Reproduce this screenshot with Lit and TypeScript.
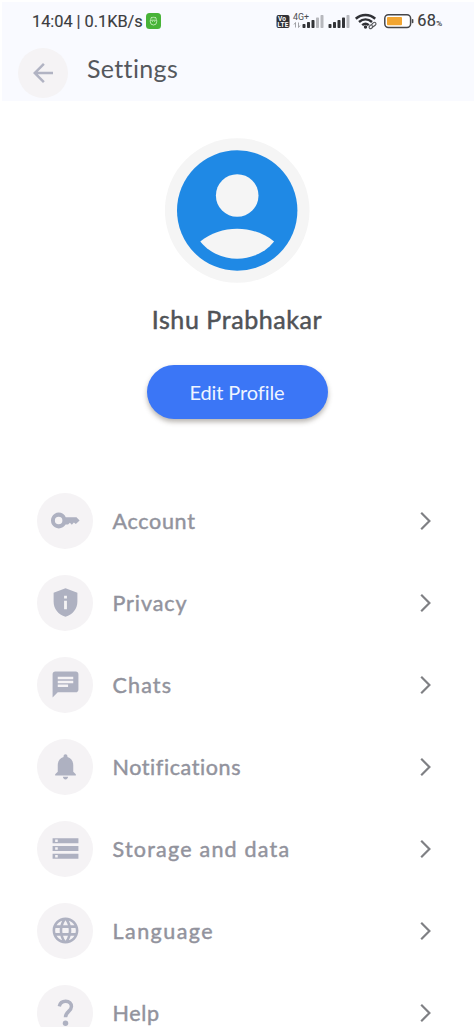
import { LitElement, html, css, svg } from "lit";
import { customElement } from "lit/decorators.js";

const keyIcon = svg`<path fill-rule="evenodd" d="M6.700 5.900c2.500 0 4.600 1.500 5.500 3.600h8.300L22.900 12l-2.900 2.700-1.500-1.200-1.600 1.700-1.500-1.400-1.400 1.300h-1.900A6.100 6.100 0 1 1 6.700 5.900zm0 3.200a2.900 2.900 0 1 0 0 5.800 2.900 2.900 0 0 0 0-5.800z"/>`;
const shieldIcon = svg`<path fill-rule="evenodd" d="M12 1L2.800 4.500v6.700c0 5.600 3.600 10.300 9.200 11.800 5.600-1.500 9.200-6.200 9.200-11.800V4.500zM10.900 6.700h2.200v2.200h-2.200zm0 3.900h2.200v6.700h-2.200z"/>`;
const chatIcon = svg`<path d="M20 2H4c-1.100 0-1.990.9-1.990 2L2 22l4-4h14c1.100 0 2-.9 2-2V4c0-1.100-.9-2-2-2zM6 6h12v2H6V6zm8 8H6v-2h8v2zm4-3H6V9h12v2z"/>`;
const bellIcon = svg`<path d="M12 22c1.100 0 2-.9 2-2h-4c0 1.100.89 2 2 2zm6-6v-5c0-3.070-1.640-5.640-4.500-6.320V4c0-.83-.67-1.500-1.500-1.500s-1.500.67-1.500 1.500v.68C7.630 5.360 6 7.920 6 11v5l-2 2v1h16v-1l-2-2z"/>`;
const storageIcon = svg`<path d="M2 20h20v-4H2v4zm2-3h2v2H4v-2zM2 4v4h20V4H2zm4 3H4V5h2v2zm-4 7h20v-4H2v4zm2-3h2v2H4v-2z"/>`;
const globeIcon = svg`<path d="M11.990 2C6.470 2 2 6.480 2 12s4.470 10 9.990 10C17.520 22 22 17.520 22 12S17.520 2 11.990 2zm6.930 6h-2.950c-.32-1.250-.78-2.450-1.380-3.560 1.840.63 3.370 1.910 4.330 3.560zM12 4.040c.83 1.200 1.480 2.530 1.910 3.960h-3.820c.43-1.430 1.080-2.760 1.910-3.960zM4.260 14C4.100 13.360 4 12.690 4 12s.1-1.360.26-2h3.380c-.08.66-.14 1.320-.14 2 0 .68.06 1.340.14 2H4.260zm.82 2h2.950c.32 1.250.78 2.450 1.380 3.560-1.840-.63-3.370-1.900-4.330-3.560zm2.950-8H5.080c.96-1.660 2.490-2.930 4.330-3.560C8.810 5.550 8.350 6.750 8.030 8zM12 19.960c-.83-1.200-1.480-2.530-1.910-3.960h3.820c-.43 1.430-1.080 2.760-1.910 3.960zM14.340 14H9.660c-.09-.66-.16-1.320-.16-2 0-.68.07-1.350.16-2h4.680c.09.65.16 1.320.16 2 0 .68-.07 1.340-.16 2zm.25 5.560c.6-1.110 1.060-2.310 1.380-3.560h2.950c-.96 1.650-2.490 2.930-4.330 3.560zM16.360 14c.08-.66.14-1.320.14-2 0-.68-.06-1.340-.14-2h3.380c.16.64.26 1.310.26 2s-.1 1.360-.26 2h-3.380z"/>`;
const helpIcon = svg`<path d="M7.200 7.200C7.800 4.500 9.500 3.300 12.100 3.300c2.900 0 4.500 1.700 4.500 4.100 0 3.600-4.600 4-4.600 8.300" fill="none" stroke="currentColor" stroke-width="2.700"/><circle cx="12" cy="20.300" r="2.100"/>`;

const items = [
  { label: "Account", icon: keyIcon, spacing: 0.7 },
  { label: "Privacy", icon: shieldIcon, spacing: 0.9 },
  { label: "Chats", icon: chatIcon, spacing: 1.15 },
  { label: "Notifications", icon: bellIcon, spacing: 0.6 },
  { label: "Storage and data", icon: storageIcon, spacing: 1.22 },
  { label: "Language", icon: globeIcon, spacing: 1.45 },
  { label: "Help", icon: helpIcon, spacing: 0.7 },
];

@customElement("status-bar")
class StatusBar extends LitElement {
  static styles = css`
    :host { display: flex; align-items: center; height: 38px; padding: 0 32px 0 32px; font: 400 16.4px Roboto, sans-serif; color: #3b3c40; -webkit-text-stroke: 0.15px currentColor; white-space: nowrap; box-sizing: border-box; }
    .time { letter-spacing: -0.05px; width: 114px; line-height: 20px; padding-top: 2px; }
    .app { display: block; width: 15px; height: 16px; margin-top: 0; }
    .signals { display: block; margin: 1px 3px 0 auto; }
    .signals text { -webkit-text-stroke: 0; }
    .level { letter-spacing: 0.2px; line-height: 20px; padding-top: 3px; }
    .percent { font-size: 8px; letter-spacing: 0; }
  `;
  render() {
    const bars = (x: number, lit: number) => [0, 1, 2, 3, 4].map((i) => {
      const h = [4, 6, 8, 10.5, 13][i];
      return svg`<rect x=${x + i * 4.5} y=${16 - h} width="3" height=${h} rx=".7" fill=${i < lit ? "#333438" : "#b7b8bd"}/>`;
    });
    return html`
      <span class="time">14:04 | 0.1KB/s</span>
      <svg class="app" viewBox="0 0 15 16"><rect width="15" height="16" rx="3.500" fill="#48b338"/><path d="M4.300 7.200h6.400v1.600a3.200 3.200 0 0 1-6.400 0zM4.500 6.500c.3-1.500 1.500-2.200 3-2.200s2.700.7 3 2.200M5 4l1 1.200M10 4 9 5.200M6 8.500h.8M8.300 8.500h.8" fill="none" stroke="#d5f4cd" stroke-width=".8"/></svg>
      <svg class="signals" width="138" height="18" viewBox="0 0 138 18">
        <rect x=".5" y="2" width="13" height="13" rx="2" fill="#303136"/>
        <text x="2" y="7.800" font-size="6.500" font-weight="700" fill="#fff" textLength="8">Vo</text>
        <text x="1.500" y="14" font-size="6.500" font-weight="700" fill="#fff" textLength="11">LTE</text>
        <text x="17" y="7.300" font-size="8.500" font-weight="400" fill="#4b4c51" textLength="16" lengthAdjust="spacingAndGlyphs">4G+</text>
        <path d="M19.500 14.500v-5l-1.500 2M22.500 9.500v5l1.500-2" fill="none" stroke="#97989d" stroke-width=".9"/>
        <g transform="translate(0 -1)">
        ${bars(26.5, 3)} ${bars(52.5, 4)}
        <g fill="none" stroke="#303136" stroke-width="2.500">
          <path d="M79.800 6.700c5.700-5 13.700-5 19.400 0M83 10c3.900-3.300 9.100-3.300 13 0M86.200 13.100c2-1.700 4.600-1.700 6.600 0"/>
        </g>
        <circle cx="89.500" cy="15" r="1.700" fill="#303136"/>
        <g fill="none" stroke="#55565a" stroke-width="1.100" transform="rotate(-40 96.500 13.500)"><rect x="92.500" y="12" width="4.600" height="3" rx="1.500" fill="#f9faff"/><rect x="96" y="12" width="4.600" height="3" rx="1.500" fill="#f9faff"/></g>
        <rect x="108.800" y="2.800" width="25.800" height="12.600" rx="3.600" fill="#fff" stroke="#45464a" stroke-width="1.500"/>
        <rect x="111" y="5" width="15" height="8.300" rx="1" fill="#f2a531"/>
        <rect x="135.800" y="7" width="1.600" height="4.200" rx=".8" fill="#45464a"/>
        </g>
      </svg>
      <span class="level">68<span class="percent">%</span></span>
    `;
  }
}

@customElement("setting-row")
class SettingRow extends LitElement {
  static properties = { item: { attribute: false } };
  declare item: (typeof items)[number];
  static styles = css`
    :host { display: flex; align-items: center; height: 82px; padding: 0 42px 0 37px; }
    .disc { width: 56px; height: 56px; border-radius: 50%; background: #f5f3f5; display: grid; place-items: center; color: #aeb1c1; flex: none; }
    .glyph { display: block; width: 31px; height: 31px; fill: currentColor; }
    .label { flex: 1; padding: 1px 0 0 19.500px; font: 400 21.500px Lato, sans-serif; line-height: 30px; color: #92939d; -webkit-text-stroke: 0.45px currentColor; white-space: nowrap; }
    .chevron { display: block; width: 13px; height: 20px; fill: none; stroke: #7f8084; stroke-width: 2.200; }
  `;
  render() {
    return html`
      <div class="disc"><svg class="glyph" viewBox="0 0 24 24">${this.item.icon}</svg></div>
      <span class="label" style="letter-spacing:${this.item.spacing}px">${this.item.label}</span>
      <svg class="chevron" viewBox="0 0 13 20"><path d="M2.200 1.800 10.400 10 2.200 18.200"/></svg>
    `;
  }
}

@customElement("app-root")
class AppRoot extends LitElement {
  static styles = css`
    :host { display: block; width: 474px; height: 1027px; overflow: hidden; background: #fff; font-family: Lato, sans-serif; box-sizing: border-box; }
    .header { height: 99px; margin: 0 0 0 2px; border-top: 2px solid #fff; background: #f9faff; }
    .bar { margin-left: -2px; }
    .title-row { display: flex; padding: 7.500px 0 0 16px; height: 50px; }
    .back { width: 50px; height: 50px; border-radius: 50%; background: #f5f3f5; display: grid; place-items: center; }
    .arrow { display: block; width: 30px; height: 30px; fill: #b1b3c3; }
    .title { margin: 2px 0 0 19px; font-size: 25px; line-height: 36px; font-weight: 400; color: #55585d; letter-spacing: 0.35px; }
    .profile { display: flex; flex-direction: column; align-items: center; padding-top: 37px; }
    .avatar { display: block; width: 145px; height: 145px; }
    .avatar circle, .avatar path { transform: translateX(-0.3px); }
    .name { margin: 18px 0 0; font-size: 25px; line-height: 36px; font-weight: 400; -webkit-text-stroke: 0.5px currentColor; color: #505357; letter-spacing: 0.57px; }
    .edit { margin: 28px 0 0; width: 181px; height: 54px; border: 0; border-radius: 27px; background: #3b76f6; color: #eef4ff; font: 400 20px Lato, sans-serif; letter-spacing: -0.1px; box-shadow: 0 3px 5px rgba(70, 60, 50, 0.38); }
    .list { padding-top: 60.500px; }
  `;
  render() {
    return html`
      <header class="header">
        <status-bar class="bar"></status-bar>
        <div class="title-row">
          <div class="back"><svg class="arrow" viewBox="0 0 24 24"><path d="M20 11H7.830l5.590-5.590L12 4l-8 8 8 8 1.410-1.410L7.830 13H20v-2z"/></svg></div>
          <h1 class="title">Settings</h1>
        </div>
      </header>
      <section class="profile">
        <svg class="avatar" viewBox="0 0 145 145">
          <circle cx="72.500" cy="72.500" r="72.300" fill="#f5f5f5"/>
          <circle cx="72.500" cy="72.500" r="60.200" fill="#1f89e5"/>
          <circle cx="72.500" cy="57.500" r="21.300" fill="#f5f5f5"/>
          <path d="M35.600 103.500C56 86.500 89 86.500 109.400 103.500C91 126.500 54 126.500 35.600 103.500Z" fill="#f5f5f5"/>
        </svg>
        <h2 class="name">Ishu Prabhakar</h2>
        <button class="edit">Edit Profile</button>
      </section>
      <main class="list">${items.map((item) => html`<setting-row .item=${item}></setting-row>`)}</main>
    `;
  }
}
